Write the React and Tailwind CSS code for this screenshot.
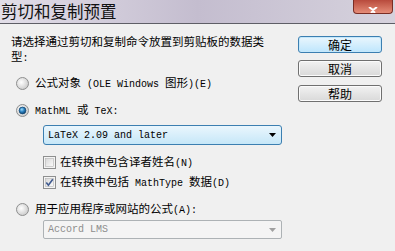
import React from 'react';

const cjk = { fontFamily: '"Noto Sans CJK SC", "Noto Sans", sans-serif' };

// Latin runs in the dialog use a narrow serif monospace
const M = ({ children, className = '' }) => (
  <span className={`font-['Liberation_Mono',monospace] text-[10px] ${className}`}>{children}</span>
);

const Radio = ({ checked, id }) => (
  <svg width="13" height="13" viewBox="0 0 13 13" className="shrink-0">
    <defs>
      <radialGradient id={`rg${id}`} cx="40%" cy="40%" r="65%">
        <stop offset="0" stopColor="#ffffff" />
        <stop offset="1" stopColor="#c9c9c9" />
      </radialGradient>
      <radialGradient id={`rb${id}`} cx="40%" cy="35%" r="70%">
        <stop offset="0" stopColor="#9bdcfb" />
        <stop offset="0.5" stopColor="#2a7fc0" />
        <stop offset="1" stopColor="#0b3e68" />
      </radialGradient>
    </defs>
    <circle cx="6.5" cy="6.5" r="6" fill={`url(#rg${id})`} stroke="#8e8f8f" />
    {checked && <circle cx="6.5" cy="6.5" r="3.4" fill={`url(#rb${id})`} stroke="#174a75" strokeWidth="0.8" />}
  </svg>
);

const Check = ({ checked }) => (
  <svg width="13" height="13" viewBox="0 0 13 13" className="shrink-0">
    <defs>
      <linearGradient id="cg" x1="0" y1="0" x2="1" y2="1">
        <stop offset="0" stopColor="#d8d8d8" />
        <stop offset="1" stopColor="#fbfbfb" />
      </linearGradient>
    </defs>
    <rect x="0.5" y="0.5" width="12" height="12" fill="#f4f4f4" stroke="#8e8f8f" />
    <rect x="2.5" y="2.5" width="8" height="8" fill="url(#cg)" stroke="#b5b5b5" strokeWidth="0.6" />
    {checked && <path d="M3.3 6.4 L5.4 9.2 L9.8 3.2" fill="none" stroke="#3f5a8f" strokeWidth="1.6" />}
  </svg>
);

const Arrow = ({ color }) => (
  <svg width="7" height="4" viewBox="0 0 7 4">
    <path d="M0 0 H7 L3.5 4 Z" fill={color} />
  </svg>
);

const Button = ({ children, primary, className = '' }) => (
  <div
    className={`h-[17px] rounded-[3px] border flex items-center justify-center text-[12px] text-black ${
      primary
        ? 'border-[#3c7fb1] bg-gradient-to-b from-[#eaf6fd] to-[#bee6fd] shadow-[inset_0_0_0_1px_#c5e8fb]'
        : 'border-[#707070] bg-gradient-to-b from-[#f2f2f2] to-[#d9d9d9] shadow-[inset_0_0_0_1px_#fbfbfb]'
    } ${className}`}
    style={cjk}
  >
    {children}
  </div>
);

export default function App() {
  return (
    <div className="w-[395px] h-[251px] bg-[#f0f0f0] flex flex-col overflow-hidden text-black" style={cjk}>
      {/* title bar */}
      <div className="h-[24px] shrink-0 flex justify-between border-b border-[#5e5e66] bg-gradient-to-r from-[#e2dee8] via-[#c4bdcf] to-[#d6d2dd]">
        <div className="pl-[1px] pt-[1px] text-[16.5px] leading-[20px] text-[#111]">剪切和复制预置</div>
        <div className="mr-[2px] w-[40px] h-[14px] rounded-b-[4px] border border-t-0 border-[#7a2d24] bg-gradient-to-b from-[#b84a3c] to-[#e58c78] flex items-end justify-center">
          <svg width="12" height="6" viewBox="0 0 12 6">
            <path d="M2 0 L6 3 L10 0 M4 6 L6 4 L8 6" stroke="#ffffff" strokeWidth="2" fill="none" />
          </svg>
        </div>
      </div>

      {/* body */}
      <div className="flex flex-1">
        <div className="flex-1 flex flex-col pt-[10px]">
          <p className="pl-[11px] text-[11.5px] leading-[15px]">
            请选择通过剪切和复制命令放置到剪贴板的数据类
            <br />
            型<M>:</M>
          </p>

          <div className="mt-[10px] pl-[16px] h-[14px] flex items-center gap-[6px] text-[11.5px]">
            <Radio id="a" />
            <span>公式对象<M>&nbsp;(OLE Windows </M>图形<M>)(E)</M></span>
          </div>

          <div className="mt-[13px] pl-[16px] h-[14px] flex items-center gap-[6px] text-[11.5px]">
            <Radio id="b" checked />
            <span><M>MathML </M>或<M> TeX:</M></span>
          </div>

          <div className="mt-[8px] ml-[43px] w-[239px] h-[20px] rounded-[3px] border border-[#3c7fb1] bg-gradient-to-b from-[#eaf6fd] to-[#c6e7f8] flex items-center justify-between pl-[4px] pr-[5px]">
            <M className="text-black">LaTeX 2.09 and later</M>
            <Arrow color="#000000" />
          </div>

          <div className="mt-[10px] ml-[43px] h-[14px] flex items-center gap-[4px] text-[11.5px]">
            <Check />
            <span>在转换中包含译者姓名<M>(N)</M></span>
          </div>

          <div className="mt-[6px] ml-[43px] h-[14px] flex items-center gap-[4px] text-[11.5px]">
            <Check checked />
            <span>在转换中包括<M> MathType </M>数据<M>(D)</M></span>
          </div>

          <div className="mt-[13px] pl-[16px] h-[14px] flex items-center gap-[6px] text-[11.5px]">
            <Radio id="c" />
            <span>用于应用程序或网站的公式<M>(A):</M></span>
          </div>

          <div className="mt-[4px] ml-[43px] w-[239px] h-[19px] rounded-[2px] border border-[#adb2b5] bg-[#f4f4f4] flex items-center justify-between pl-[4px] pr-[5px]">
            <M className="text-[#8d8d8d]">Accord LMS</M>
            <Arrow color="#a0a0a0" />
          </div>
        </div>

        <div className="w-[84px] mr-[13px] pt-[12px] flex flex-col">
          <Button primary>确定</Button>
          <Button className="mt-[7px]">取消</Button>
          <Button className="mt-[8px]">帮助</Button>
        </div>
      </div>
    </div>
  );
}
